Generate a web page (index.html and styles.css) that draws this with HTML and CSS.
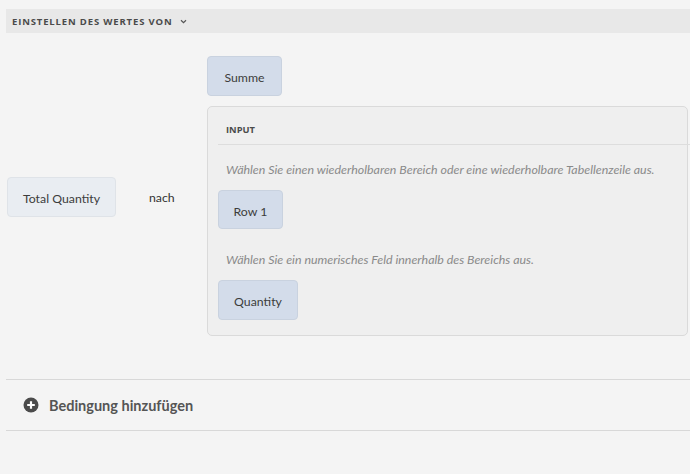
FILE: index.html
```html
<!DOCTYPE html>
<html>
<head>
<meta charset="utf-8">
<link rel="stylesheet" href="styles.css">
</head>
<body>
<div class="header">
  <span class="header-title">EINSTELLEN DES WERTES VON</span>
  <svg class="chev" width="7" height="5" viewBox="0 0 7 5"><path d="M1 1.2 L3.5 3.6 L6 1.2" fill="none" stroke="#555" stroke-width="1.2"/></svg>
</div>
<div class="rule">
  <div class="left">
    <div class="chip chip-light total">Total Quantity</div>
    <div class="nach">nach</div>
  </div>
  <div class="right">
    <div class="chip summe">Summe</div>
    <div class="panel">
      <div class="panel-head">INPUT</div>
      <div class="hint">Wählen Sie einen wiederholbaren Bereich oder eine wiederholbare Tabellenzeile aus.</div>
      <div class="chip row1">Row 1</div>
      <div class="hint hint2">Wählen Sie ein numerisches Feld innerhalb des Bereichs aus.</div>
      <div class="chip qty">Quantity</div>
    </div>
  </div>
</div>
<div class="add">
  <svg class="plus" width="16" height="16" viewBox="0 0 16 16"><circle cx="8" cy="8" r="7.5" fill="#4b4b4b"/><path d="M8 4.2 V11.8 M4.2 8 H11.8" stroke="#fff" stroke-width="2.2"/></svg>
  <span class="add-text">Bedingung hinzufügen</span>
</div>
</body>
</html>
```
FILE: styles.css
```css
html, body {
  margin: 0;
  padding: 0;
  background: #f4f4f4;
  font-family: "Lato", "Open Sans", sans-serif;
  color: #333;
}
body {
  padding-top: 9px;
}
.header {
  margin-left: 6px;
  height: 24px;
  background: #e8e8e8;
  display: flex;
  align-items: center;
  padding-left: 6px;
}
.header-title {
  font-family: "Open Sans", sans-serif;
  font-weight: 700;
  font-size: 9.5px;
  letter-spacing: 0.85px;
  color: #4b4b4b;
}
.chev {
  margin-left: 7px;
}
.rule {
  display: flex;
  align-items: center;
  margin-top: 23px;
  padding-left: 7px;
}
.left {
  display: flex;
  align-items: center;
  margin-top: 1px;
}
.chip {
  box-sizing: border-box;
  display: flex;
  align-items: center;
  justify-content: center;
  padding-top: 3px;
  background: #d3dcea;
  border: 1px solid #c9d2df;
  border-radius: 4px;
  font-size: 12.3px;
  color: #3c3c3c;
}
.chip-light {
  background: #e9edf2;
  border-color: #dfe3e8;
}
.total {
  width: 109px;
  height: 40px;
}
.nach {
  margin-left: 33px;
  width: 58px;
  font-size: 12.3px;
  color: #333;
  margin-top: 1px;
}
.right {
  display: flex;
  flex-direction: column;
}
.summe {
  width: 75px;
  height: 40px;
}
.panel {
  box-sizing: border-box;
  margin-top: 10px;
  width: 481px;
  height: 230px;
  background: #efefef;
  border: 1px solid #dadada;
  border-radius: 5px;
  padding-left: 10px;
}
.panel-head {
  margin-right: -3px;
  height: 38px;
  border-bottom: 1px solid #dddddd;
  padding-left: 8px;
  padding-top: 17px;
  box-sizing: border-box;
  font-family: "Open Sans", sans-serif;
  font-weight: 700;
  font-size: 9.3px;
  line-height: 12px;
  color: #4b4b4b;
}
.hint {
  margin-top: 17px;
  padding-left: 8px;
  font-style: italic;
  font-size: 12.4px;
  color: #8a8a8a;
  line-height: 16px;
}
.row1 {
  margin-top: 12px;
  width: 65px;
  height: 39px;
}
.hint2 {
  margin-top: 23px;
}
.qty {
  margin-top: 12px;
  width: 80px;
  height: 40px;
}
.add {
  margin-top: 43px;
  margin-left: 6px;
  height: 50px;
  border-top: 1px solid #d8d8d8;
  border-bottom: 1px solid #d8d8d8;
  display: flex;
  align-items: center;
  padding-left: 17px;
}
.plus {
  display: block;
}
.add-text {
  margin-left: 10px;
  font-family: "Lato", sans-serif;
  font-weight: 700;
  font-size: 14.5px;
  color: #555;
}
```
